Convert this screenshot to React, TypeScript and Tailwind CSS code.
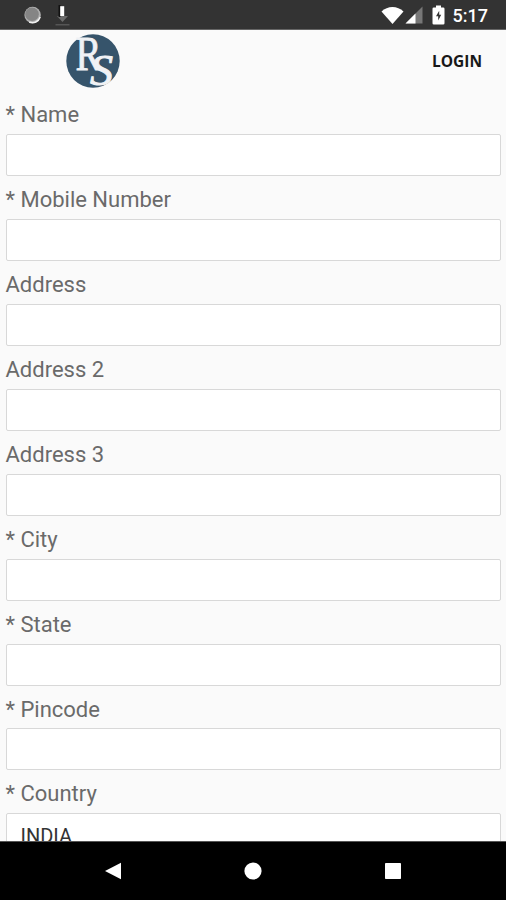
import React from 'react';

interface Field {
  label: string;
  value?: string;
}

const fields: Field[] = [
  { label: '* Name' },
  { label: '* Mobile Number' },
  { label: 'Address' },
  { label: 'Address 2' },
  { label: 'Address 3' },
  { label: '* City' },
  { label: '* State' },
  { label: '* Pincode' },
  { label: '* Country', value: 'INDIA' },
];

function StatusBar() {
  return (
    <div className="h-[30px] shrink-0 bg-[#333333] border-b border-[#666666] flex items-center justify-between pl-6 pr-[18px]">
      <div className="flex items-center gap-[13px]">
        <svg width="18" height="20" viewBox="0 0 18 20">
          <circle cx="8.6" cy="10" r="8.2" fill="#b0b0b0" />
          <circle cx="8" cy="9.2" r="6.8" fill="#858585" />
          <path d="M16.2 12a8 8 0 0 1-11 5" fill="none" stroke="#f2f2f2" strokeWidth="1.4" />
        </svg>
        <svg width="16" height="24" viewBox="0 0 16 24">
          <path d="M2 13h11l-5.5 6z" fill="#6b6b6b" />
          <rect x="3.5" y="2" width="2" height="12" fill="#111111" />
          <rect x="5.2" y="3.2" width="4" height="9.8" fill="#ffffff" />
          <rect x="0.5" y="21" width="14" height="1.5" fill="#555555" />
        </svg>
      </div>
      <div className="flex items-center">
        <svg width="23" height="20" viewBox="0 0 23 20">
          <path d="M0.5 6.5C6.5 0.5 16.5 0.5 22.5 6.5L11.5 19z" fill="#ffffff" />
        </svg>
        <svg className="ml-[1px]" width="18" height="18" viewBox="0 0 18 18">
          <path d="M17.5 0.5v17H0.5z" fill="#777777" />
          <path d="M10.5 7.5v10H0.5z" fill="#ffffff" />
        </svg>
        <svg className="ml-[9px]" width="13" height="20" viewBox="0 0 13 20">
          <path d="M4 0.5h5v2h2.2q1.3 0 1.3 1.3v14.4q0 1.3-1.3 1.3H1.8q-1.3 0-1.3-1.3V3.8q0-1.3 1.3-1.3H4z" fill="#ffffff" />
          <path d="M7.2 5.8L4 11.2H6.2v4.2L9.2 9.8H7.2z" fill="#333333" />
        </svg>
        <span className="ml-[8px] pt-[2px] text-[18px] leading-none font-medium text-white">5:17</span>
      </div>
    </div>
  );
}

// Interlocking monogram: the S is tucked under the leg of the R
function Logo() {
  return (
    <svg className="overflow-visible" width="56" height="56" viewBox="0 0 56 56" aria-label="RS">
      <circle cx="28" cy="28" r="26.7" fill="#36546b" />
      <g fill="#f0f2f5" fontFamily="'Liberation Serif', serif">
        <text x="10.5" y="36.5" fontSize="48" stroke="#f0f2f5" strokeWidth="0.8" textLength="26" lengthAdjust="spacingAndGlyphs">R</text>
        <text x="25" y="51.5" fontSize="44" fontStyle="italic" stroke="#f0f2f5" strokeWidth="1" textLength="23" lengthAdjust="spacingAndGlyphs">S</text>
      </g>
    </svg>
  );
}

export default function App() {
  return (
    <div className="h-[900px] w-full flex flex-col overflow-hidden bg-[#fafafa] font-['Roboto',sans-serif]">
      <StatusBar />

      {/* App header */}
      <header className="h-[62px] shrink-0 flex items-center justify-between pl-[65px] pr-[24px]">
        <Logo />
        <button className="pt-[2px] font-['Open_Sans',sans-serif] text-[15.5px] font-bold text-[#181818]">LOGIN</button>
      </header>

      {/* Registration form, cut off by the navigation bar */}
      <form className="flex-1 min-h-0 overflow-hidden px-[5.5px]">
        {fields.map((field) => (
          <label key={field.label} className="block h-[84.88px]">
            <span className="block h-[42.3px] pt-[8.4px] text-[22px] leading-[30px] text-[#6a6a6a]">
              {field.label}
            </span>
            <input
              type="text"
              defaultValue={field.value}
              className="block w-full h-[42px] rounded-[2px] border border-[#d8d8d8] bg-white px-[14px] pt-[4px] text-[20px] text-[#333333] outline-none"
            />
          </label>
        ))}
      </form>

      {/* System navigation */}
      <nav className="h-[59px] shrink-0 bg-black border-t border-[#555555] flex items-center justify-around pl-[43px] pr-[43px]">
        <svg width="18" height="18" viewBox="0 0 18 18">
          <path d="M17 0.8v16.4L1 9z" fill="#ffffff" />
        </svg>
        <svg width="18" height="18" viewBox="0 0 18 18">
          <circle cx="9" cy="9" r="8.6" fill="#ffffff" />
        </svg>
        <svg width="18" height="18" viewBox="0 0 18 18">
          <rect x="1" y="1" width="16" height="16" rx="0.8" fill="#ffffff" />
        </svg>
      </nav>
    </div>
  );
}
